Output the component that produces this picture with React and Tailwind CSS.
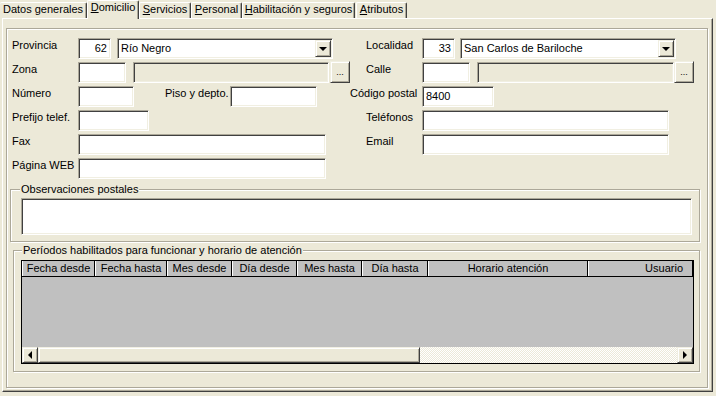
import React from 'react';

const sunken =
  'border border-t-[#aca899] border-l-[#aca899] border-b-white border-r-white shadow-[inset_1px_1px_0_#404040,inset_-1px_-1px_0_#f1efe2]';
const raised =
  'border border-t-[#f1efe2] border-l-[#f1efe2] border-b-[#404040] border-r-[#404040] shadow-[inset_1px_1px_0_#fff,inset_-1px_-1px_0_#aca899]';
const etched =
  'border border-[#aca899] shadow-[inset_1px_1px_0_#fff,1px_1px_0_#fff]';

const Label = ({ className = '', children }) => (
  <div className={`pt-[1px] whitespace-nowrap ${className}`}>{children}</div>
);

const Field = ({ className = '', disabled, children }) => (
  <div
    className={`h-[21px] flex items-center px-[3px] ${disabled ? 'bg-[#ece9d8]' : 'bg-white'} ${sunken} ${className}`}
  >
    {children}
  </div>
);

const Combo = ({ className = '', text }) => (
  <div className={`h-[21px] flex items-center pl-[3px] pr-[1px] bg-white ${sunken} ${className}`}>
    <span className="flex-1 whitespace-nowrap">{text}</span>
    <div className={`w-[16px] h-[17px] flex items-center justify-center bg-[#ece9d8] ${raised}`}>
      <div className="w-0 h-0 border-x-[4px] border-x-transparent border-t-[4px] border-t-black" />
    </div>
  </div>
);

const DotsButton = ({ className = '' }) => (
  <div
    className={`w-[20px] h-[22px] -mt-[1px] flex items-end justify-center pb-[5px] bg-[#ece9d8] text-[9px] leading-[9px] ${raised} ${className}`}
  >
    ...
  </div>
);

const Tab = ({ className = '', active, children }) => (
  <div
    className={`flex justify-center whitespace-nowrap rounded-t-[2px] border-t border-l border-r border-t-white border-l-white border-r-[#404040] shadow-[inset_-1px_0_0_#aca899] bg-[#ece9d8] ${
      active ? 'h-[19px]' : 'h-[16px] mb-[1px]'
    } ${className}`}
  >
    <span>{children}</span>
  </div>
);

const columns = [
  { label: 'Fecha desde', w: 'w-[73px]', align: 'justify-center' },
  { label: 'Fecha hasta', w: 'w-[72px]', align: 'justify-center' },
  { label: 'Mes desde', w: 'w-[65px]', align: 'justify-center' },
  { label: 'Día desde', w: 'w-[65px]', align: 'justify-center' },
  { label: 'Mes hasta', w: 'w-[65px]', align: 'justify-center' },
  { label: 'Día hasta', w: 'w-[66px]', align: 'justify-center' },
  { label: 'Horario atención', w: 'w-[160px]', align: 'justify-center' },
  { label: 'Usuario', w: 'w-[105px]', align: 'justify-end pr-[9px]' },
];

const App = () => {
  return (
    <div className="w-[716px] h-[396px] overflow-hidden bg-[#ece9d8] text-black text-[11px] leading-[13px] font-['Liberation_Sans',Arial,sans-serif]">
      {/* tabs */}
      <div className="relative z-10 flex items-end h-[19px] -mb-[1px]">
        <Tab className="w-[87px] border-l-0">
          Datos <span className="underline">g</span>enerales
        </Tab>
        <Tab className="w-[52px]" active>
          <span className="underline">D</span>omicilio
        </Tab>
        <Tab className="w-[52px]">
          <span className="underline">S</span>ervicios
        </Tab>
        <Tab className="w-[51px]">
          <span className="underline">P</span>ersonal
        </Tab>
        <Tab className="w-[113px]">
          <span className="underline">H</span>abilitación y seguros
        </Tab>
        <Tab className="w-[51px] ml-[1px]">
          <span className="underline">A</span>tributos
        </Tab>
      </div>

      {/* page */}
      <div className="ml-[2px] w-[711px] h-[374px] border border-t-white border-l-white border-b-[#404040] border-r-[#404040] shadow-[inset_-1px_-1px_0_#aca899]">
        <div className={`ml-[3px] mt-[9px] w-[702px] h-[360px] ${etched}`}>
          {/* form rows */}
          <div className="flex pl-[5px] pt-[9px]">
            <div className="w-[338px] flex flex-col gap-[3px]">
              <div className="flex items-start">
                <Label className="w-[66px]">Provincia</Label>
                <Field className="w-[33px] justify-end">62</Field>
                <Combo className="w-[216px] ml-[6px]" text="Río Negro" />
              </div>
              <div className="flex items-start">
                <Label className="w-[66px]">Zona</Label>
                <Field className="w-[48px]" />
                <Field className="w-[196px] ml-[7px]" disabled />
                <DotsButton className="ml-[1px]" />
              </div>
              <div className="flex items-start">
                <Label className="w-[66px]">Número</Label>
                <Field className="w-[56px]" />
                <Label className="w-[65px] ml-[31px]">Piso y depto.</Label>
                <Field className="w-[87px]" />
              </div>
              <div className="flex items-start">
                <Label className="w-[66px]">Prefijo telef.</Label>
                <Field className="w-[71px]" />
              </div>
              <div className="flex items-start">
                <Label className="w-[66px]">Fax</Label>
                <Field className="w-[248px]" />
              </div>
              <div className="flex items-start">
                <Label className="w-[66px]">Página WEB</Label>
                <Field className="w-[248px]" />
              </div>
            </div>

            <div className="flex flex-col gap-[3px]">
              <div className="flex items-start">
                <Label className="w-[72px] pl-[16px]">Localidad</Label>
                <Field className="w-[33px] justify-end">33</Field>
                <Combo className="w-[216px] ml-[5px]" text="San Carlos de Bariloche" />
              </div>
              <div className="flex items-start">
                <Label className="w-[72px] pl-[16px]">Calle</Label>
                <Field className="w-[48px]" />
                <Field className="w-[197px] ml-[7px]" disabled />
                <DotsButton />
              </div>
              <div className="flex items-start">
                <Label className="w-[72px]">Código postal</Label>
                <Field className="w-[72px]">8400</Field>
              </div>
              <div className="flex items-start">
                <Label className="w-[72px] pl-[16px]">Teléfonos</Label>
                <Field className="w-[247px]" />
              </div>
              <div className="flex items-start">
                <Label className="w-[72px] pl-[16px]">Email</Label>
                <Field className="w-[247px]" />
              </div>
            </div>
          </div>

          {/* observaciones */}
          <fieldset className={`ml-[3px] mt-[4px] w-[690px] pt-[2px] pb-[6px] ${etched}`}>
            <legend className="ml-[9px] px-[1px] bg-[#ece9d8] leading-[13px]">Observaciones postales</legend>
            <div className={`ml-[10px] w-[671px] h-[37px] bg-white ${sunken}`} />
          </fieldset>

          {/* periodos */}
          <fieldset className={`ml-[6px] mt-[2px] w-[687px] pt-[3px] pb-[7px] ${etched}`}>
            <legend className="ml-[8px] px-[1px] bg-[#ece9d8] leading-[13px]">
              Períodos habilitados para funcionar y horario de atención
            </legend>
            <div className="ml-[7px] w-[673px] h-[104px] border border-black flex flex-col bg-[#c0c0c0]">
              <div className="flex h-[16px] border-b border-black">
                {columns.map((col) => (
                  <div
                    key={col.label}
                    className={`${col.w} flex items-center whitespace-nowrap border-l border-l-white border-r border-r-black ${col.align}`}
                  >
                    {col.label}
                  </div>
                ))}
              </div>
              <div className="flex-1" />
              <div className="flex h-[16px] bg-[#ece9d8]">
                <div className={`w-[16px] flex items-center justify-center ${raised}`}>
                  <div className="w-0 h-0 border-y-[4px] border-y-transparent border-r-[4px] border-r-black" />
                </div>
                <div className={`w-[382px] ${raised}`} />
                <div className="w-[257px] bg-[repeating-conic-gradient(#ffffff_0%_25%,#ece9d8_0%_50%)] bg-[length:2px_2px]" />
                <div className={`w-[16px] flex items-center justify-center ${raised}`}>
                  <div className="w-0 h-0 border-y-[4px] border-y-transparent border-l-[4px] border-l-black" />
                </div>
              </div>
            </div>
          </fieldset>
        </div>
      </div>
    </div>
  );
};

export default App;
